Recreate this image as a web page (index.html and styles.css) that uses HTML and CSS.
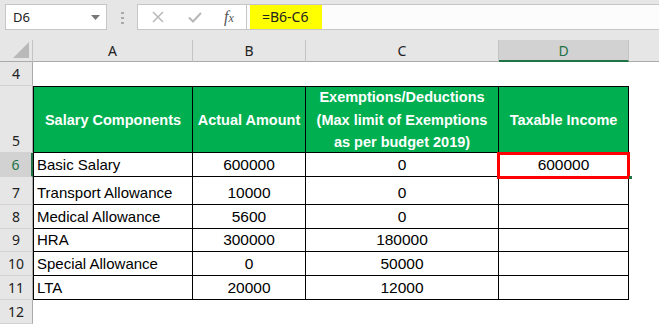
FILE: index.html
```html
<!DOCTYPE html>
<html lang="en">
<head>
  <meta charset="UTF-8" />
  <title>Taxable Income</title>
  <link rel="stylesheet" href="styles.css">
</head>
<body>
  <div class="toolbar">
    <div class="namebox">
      <span>D6</span>
      <svg class="arrow" width="9" height="5" viewBox="0 0 9 5"><polygon points="0,0 9,0 4.5,5" fill="#777"/></svg>
    </div>
    <div class="grip"><i></i><i></i><i></i></div>
    <div class="fxbox">
      <svg class="icon" width="12" height="12" viewBox="0 0 12 12"><path d="M1 1 L11 11 M11 1 L1 11" stroke="#b8b8b8" stroke-width="1.5" fill="none"/></svg>
      <svg class="icon" width="14" height="11" viewBox="0 0 14 11"><path d="M1 5.5 L5 9.5 L13 1" stroke="#b8b8b8" stroke-width="2" fill="none"/></svg>
      <span class="fx">f<small>x</small></span>
    </div>
    <div class="formula"><span class="hl">=B6-C6</span></div>
  </div>

  <div class="sheet">
    <!-- column headers -->
    <div class="corner">
      <svg width="16" height="16" viewBox="0 0 16 16"><polygon points="16,0 16,16 0,16" fill="#b9b9b9"/></svg>
    </div>
    <div class="ch">A</div>
    <div class="ch">B</div>
    <div class="ch">C</div>
    <div class="ch sel">D</div>
    <div class="ch last"></div>

    <!-- row 4 -->
    <div class="rh">4</div>
    <div class="blank"></div>

    <!-- row 5 -->
    <div class="rh">5</div>
    <div class="c head first">Salary Components</div>
    <div class="c head">Actual Amount</div>
    <div class="c head">Exemptions/Deductions<br>(Max limit of Exemptions<br>as per budget 2019)</div>
    <div class="c head">Taxable Income</div>
    <div></div>

    <div class="rh sel">6</div>
    <div class="c first">Basic Salary</div>
    <div class="c num">600000</div>
    <div class="c num">0</div>
    <div class="c num active">600000</div>
    <div></div>

    <div class="rh">7</div>
    <div class="c first">Transport Allowance</div>
    <div class="c num">10000</div>
    <div class="c num">0</div>
    <div class="c num"></div>
    <div></div>

    <div class="rh">8</div>
    <div class="c first">Medical Allowance</div>
    <div class="c num">5600</div>
    <div class="c num">0</div>
    <div class="c num"></div>
    <div></div>

    <div class="rh">9</div>
    <div class="c first">HRA</div>
    <div class="c num">300000</div>
    <div class="c num">180000</div>
    <div class="c num"></div>
    <div></div>

    <div class="rh">10</div>
    <div class="c first">Special Allowance</div>
    <div class="c num">0</div>
    <div class="c num">50000</div>
    <div class="c num"></div>
    <div></div>

    <div class="rh">11</div>
    <div class="c first">LTA</div>
    <div class="c num">20000</div>
    <div class="c num">12000</div>
    <div class="c num"></div>
    <div></div>

    <div class="rh">12</div>
    <div class="blank"></div>
  </div>
</body>
</html>
```

FILE: styles.css
```css
* {
  box-sizing: border-box;
  margin: 0;
  padding: 0;
}
body {
  width: 659px;
  height: 324px;
  overflow: hidden;
  background: #fff;
  font-family: 'Liberation Sans', Arial, sans-serif;
}
.toolbar {
  display: flex;
  align-items: flex-start;
  height: 40px;
  padding-top: 4px;
  background: #e6e6e6;
}
.namebox {
  margin-left: 5px;
  width: 102px;
  height: 26px;
  border: 1px solid #c6c6c6;
  background: #fff;
  display: flex;
  align-items: center;
  justify-content: space-between;
  padding: 0 6px 0 7px;
  font-family: 'Noto Sans', sans-serif;
  font-size: 13px;
  color: #222;
}
.grip {
  display: flex;
  flex-direction: column;
  gap: 3px;
  margin: 8px 0 0 14px;
}
.grip i {
  display: block;
  width: 3px;
  height: 2px;
  background: #a9a9a9;
}
.fxbox {
  margin-left: 13px;
  width: 110px;
  height: 26px;
  border: 1px solid #c6c6c6;
  background: #fff;
  display: flex;
  align-items: center;
  padding-left: 14px;
}
.fxbox .icon + .icon {
  margin-left: 24px;
}
.fx {
  margin-left: 22px;
  font-family: 'Liberation Serif', serif;
  font-style: italic;
  font-size: 16px;
  color: #555;
}
.fx small {
  font-size: 12px;
}
.formula {
  flex: 1;
  height: 26px;
  border-top: 1px solid #c6c6c6;
  border-bottom: 1px solid #c6c6c6;
  background: #fcfcfc;
  padding-left: 3px;
}
.hl {
  display: inline-block;
  height: 24px;
  line-height: 24px;
  background: #ffff00;
  padding: 0 14px 0 12px;
  font-family: 'Noto Sans', sans-serif;
  font-size: 14px;
  color: #222;
}
.sheet {
  display: grid;
  grid-template-columns: 33px 160px 113px 193px 130px 1fr;
  grid-template-rows: 22px 24px 67px 24px 28px 24px 23px 24px 24px 24px;
}
.corner {
  background: #e6e6e6;
  border-right: 1px solid #c4c4c4;
  border-bottom: 1px solid #ababab;
  display: flex;
  align-items: flex-end;
  justify-content: flex-end;
  padding: 0 3px 3px 0;
}
.ch {
  background: #e6e6e6;
  border-right: 1px solid #c4c4c4;
  border-bottom: 1px solid #ababab;
  text-align: center;
  line-height: 21px;
  font-family: 'Noto Sans', sans-serif;
  font-size: 14px;
  color: #222;
}
.ch.sel {
  background: #d2d2d2;
  color: #217346;
  border-bottom: 2px solid #217346;
}
.ch.last {
  border-right: none;
}
.rh {
  background: #e6e6e6;
  border-right: 1px solid #ababab;
  border-bottom: 1px solid #d2d2d2;
  display: flex;
  align-items: flex-end;
  justify-content: center;
  padding-bottom: 1px;
  font-family: 'Noto Sans', sans-serif;
  font-size: 14px;
  line-height: 20px;
  color: #222;
}
.rh.sel {
  background: #d2d2d2;
  color: #217346;
  border-right: 2px solid #217346;
}
.blank {
  grid-column: 2 / -1;
}
.c {
  border-right: 1px solid #000;
  border-bottom: 1px solid #000;
  font-size: 15px;
  line-height: 20px;
  color: #000;
  display: flex;
  align-items: flex-end;
  padding-bottom: 1px;
}
.c.first {
  border-left: 1px solid #000;
  padding-left: 3px;
}
.c.num {
  justify-content: center;
  font-size: 15.5px;
}
.c.head {
  border-top: 1px solid #000;
  background: #00b050;
  color: #fff;
  font-size: 14.5px;
  font-weight: bold;
  line-height: 22.5px;
  align-items: center;
  justify-content: center;
  text-align: center;
  padding: 1px 0 0;
}
.c.head.first {
  padding-left: 0;
}
.active {
  position: relative;
}
.active::after {
  content: "";
  position: absolute;
  left: -2px;
  top: -1px;
  right: -2px;
  bottom: -3px;
  border: 3px solid #ff0000;
}
.active::before {
  content: "";
  position: absolute;
  right: -4px;
  bottom: -3px;
  width: 3px;
  height: 3px;
  background: #217346;
  z-index: 1;
}
```
